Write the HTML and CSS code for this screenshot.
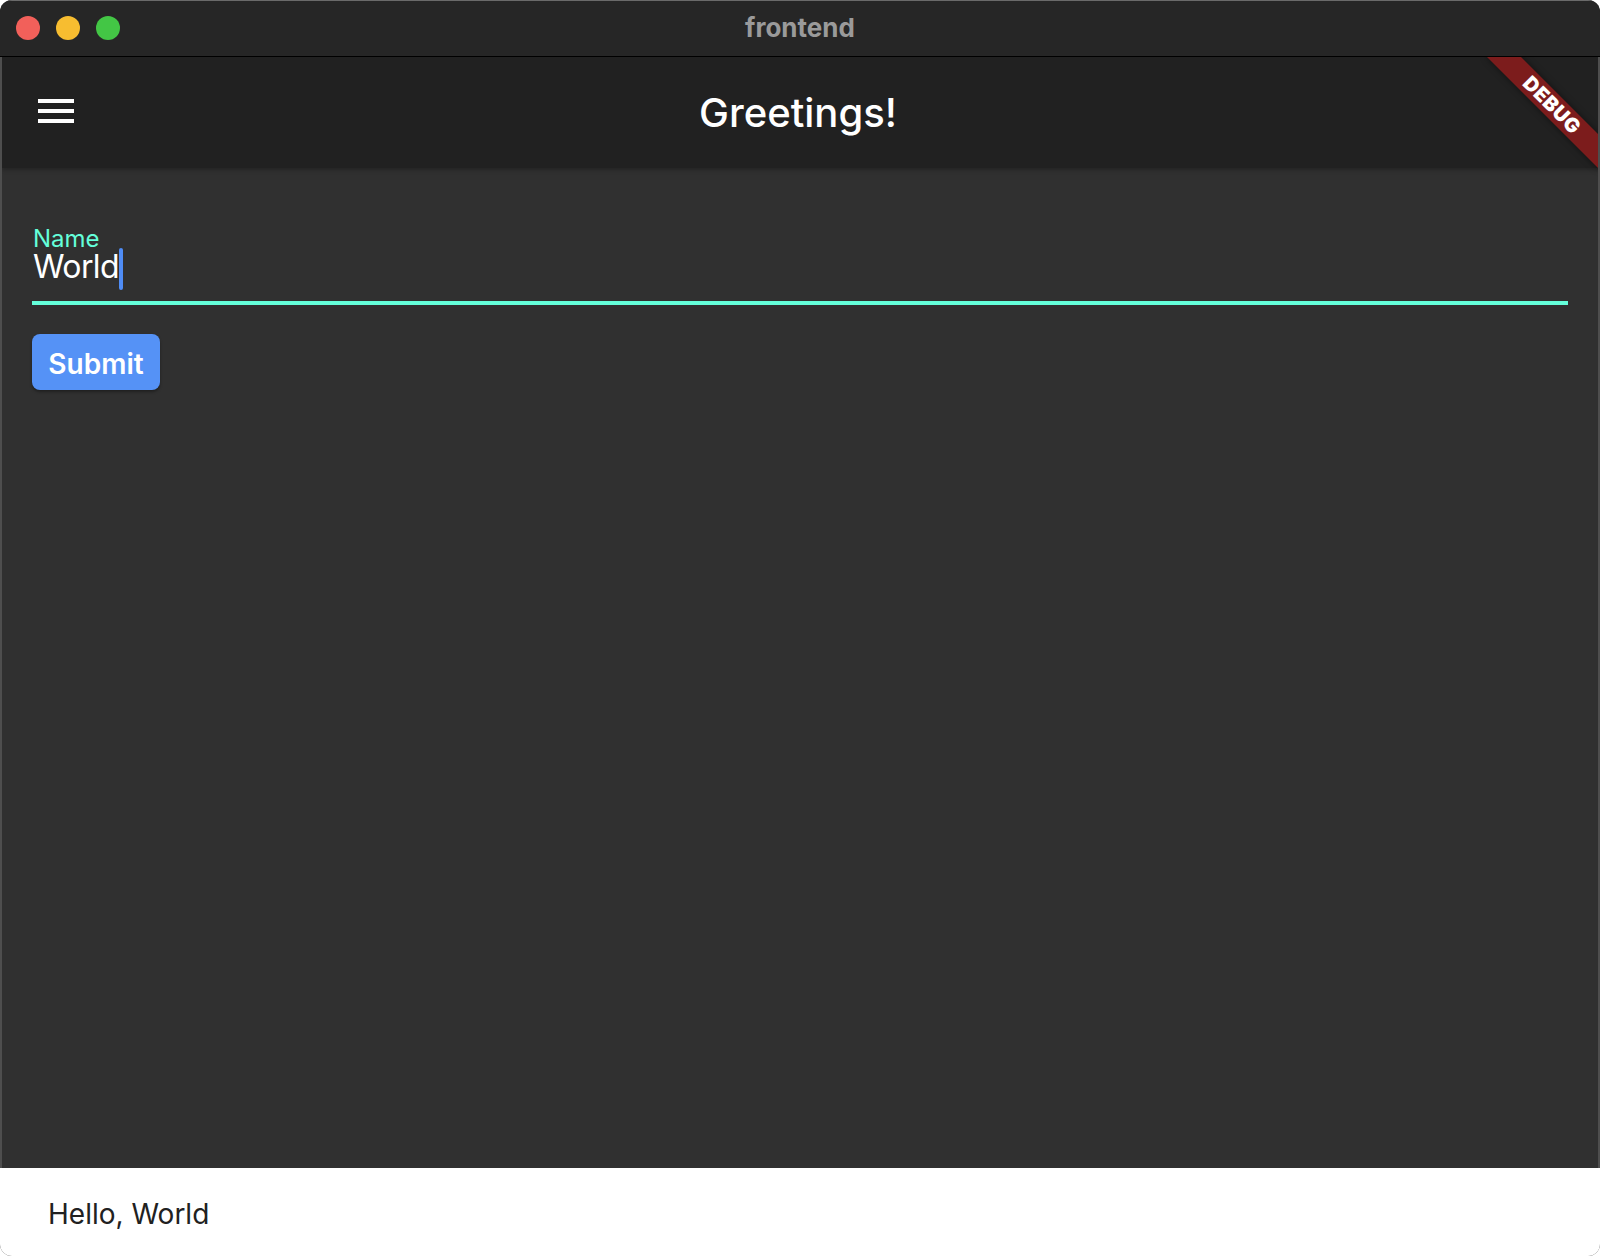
FILE: index.html
```html
<!DOCTYPE html>
<html>
<head>
<meta charset="utf-8">
<title>frontend</title>
<link rel="stylesheet" href="styles.css">
</head>
<body>
<div class="window">
  <div class="titlebar">
    <div class="lights">
      <span class="light red"></span>
      <span class="light yellow"></span>
      <span class="light green"></span>
    </div>
    <div class="wintitle">frontend</div>
  </div>
  <div class="app">
    <header class="appbar">
      <button class="menu" aria-label="menu">
        <svg width="48" height="48" viewBox="0 0 24 24"><path fill="#fff" d="M3 18h18v-2H3v2zm0-5h18v-2H3v2zm0-7v2h18V6H3z"/></svg>
      </button>
      <h1 class="title">Greetings!</h1>
    </header>
    <main class="content">
      <div class="field">
        <div class="label">Name</div>
        <div class="value"><span class="text">World</span><span class="cursor"></span></div>
        <div class="underline"></div>
      </div>
      <button class="submit">Submit</button>
    </main>
    <div class="banner">DEBUG</div>
  </div>
  <div class="snackbar"><span>Hello, World</span></div>
</div>
</body>
</html>
```
FILE: styles.css
```css
html, body {
  margin: 0;
  padding: 0;
  background: #ffffff;
}
body {
  font-family: Inter, "Noto Sans", "Liberation Sans", sans-serif;
}
.window {
  width: 1600px;
  height: 1256px;
  border-radius: 12px;
  overflow: hidden;
  background: #303030;
  display: flex;
  flex-direction: column;
}
.titlebar {
  height: 55px;
  flex: none;
  background: #262626;
  border-top: 1px solid #6a6a6a;
  border-bottom: 1px solid #000;
  box-sizing: content-box;
  position: relative;
  display: flex;
  align-items: center;
  justify-content: center;
}
.lights {
  position: absolute;
  left: 16px;
  top: 15px;
  display: flex;
  gap: 16px;
}
.light {
  width: 24px;
  height: 24px;
  border-radius: 50%;
  display: block;
}
.red { background: #f2605a; }
.yellow { background: #f7bd30; }
.green { background: #43c645; }
.wintitle {
  color: #9a9a9a;
  font-weight: 700;
  font-size: 26px;
  line-height: 26px;
  margin-top: -1px;
}
.app {
  flex: 1;
  position: relative;
  overflow: hidden;
  display: flex;
  flex-direction: column;
  border-left: 2px solid #4e4e4e;
  border-right: 2px solid #4e4e4e;
}
.appbar {
  height: 111px;
  flex: none;
  background: #212121;
  display: flex;
  align-items: center;
  position: relative;
  box-shadow: 0 2px 4px rgba(0,0,0,0.25);
  z-index: 1;
}
.menu {
  position: absolute;
  left: 30px;
  top: 30px;
  width: 48px;
  height: 48px;
  padding: 0;
  border: 0;
  background: none;
  display: block;
}
.menu svg { display: block; }
.title {
  margin: 0 auto;
  color: #ffffff;
  font-size: 40px;
  font-weight: 500;
  line-height: 40px;
  padding-top: 1px;
  position: relative;
  left: -2px;
}
.content {
  padding: 61px 30px 0 30px;
  display: flex;
  flex-direction: column;
  align-items: flex-start;
}
.field {
  align-self: stretch;
}
.label {
  color: #64ffda;
  font-size: 24px;
  line-height: 20px;
  height: 20px;
  padding-left: 1px;
}
.value {
  display: flex;
  align-items: flex-start;
  height: 48px;
  margin-top: 4px;
  padding-left: 1px;
}
.text {
  color: #ffffff;
  font-size: 32px;
  line-height: 28px;
  letter-spacing: -0.6px;
}
.cursor {
  width: 4px;
  height: 42px;
  margin-top: -5px;
  background: #4f8cf5;
  border-radius: 2px;
  display: block;
}
.underline {
  height: 4px;
  background: #64ffda;
}
.submit {
  margin-top: 29px;
  width: 128px;
  height: 56px;
  border: 0;
  border-radius: 8px;
  background: #5592f6;
  color: #ffffff;
  font-family: Inter, "Noto Sans", sans-serif;
  font-size: 28px;
  font-weight: 600;
  padding: 3px 0 0 0;
  box-shadow: 0 2px 3px rgba(0,0,0,0.35);
}
.banner {
  position: absolute;
  left: 1470px;
  top: 36px;
  width: 160px;
  height: 24px;
  background: #7c1c1c;
  color: #ffffff;
  font-size: 20px;
  font-weight: 900;
  line-height: 24px;
  text-align: center;
  letter-spacing: 0.5px;
  transform: rotate(45deg);
  box-shadow: 0 0 6px rgba(0,0,0,0.5);
  z-index: 2;
}
.snackbar {
  height: 88px;
  flex: none;
  background: #ffffff;
  display: flex;
  align-items: center;
  padding-left: 48px;
  color: #212121;
  font-size: 28px;
}
.snackbar span {
  line-height: 28px;
  margin-top: 3px;
}
```
